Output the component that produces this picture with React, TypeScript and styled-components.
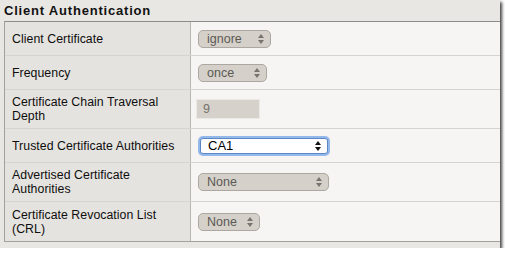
import { createGlobalStyle, styled } from 'styled-components';

const GlobalStyle = createGlobalStyle`
  html, body {
    margin: 0;
    padding: 0;
    background: #ffffff;
  }
  body {
    font-family: 'Liberation Sans', Arial, sans-serif;
  }
`;

const Panel = styled.section`
  width: 500px;
  height: 248px;
  box-sizing: border-box;
  background: #e9e7e3;
  box-shadow: 2px 2px 3px rgba(0, 0, 0, 0.75);
  display: flex;
  flex-direction: column;
`;

const Title = styled.h2`
  margin: 0;
  height: 21px;
  padding-left: 4px;
  display: flex;
  align-items: center;
  font-size: 13px;
  font-weight: bold;
  letter-spacing: 0.8px;
  color: #111;
`;

const Table = styled.div`
  margin-left: 4px;
  border-top: 1px solid #8e8c88;
  border-bottom: 1px solid #a3a19d;
  border-left: 1px solid #a3a19d;
  display: flex;
  flex-direction: column;
`;

const Row = styled.div<{ $h: number; $last?: boolean }>`
  display: grid;
  grid-template-columns: 186px 1fr;
  height: ${(p) => p.$h}px;
  box-sizing: border-box;
  border-bottom: ${(p) => (p.$last ? 'none' : '1px solid #d6d4d0')};
`;

const Label = styled.div`
  background: #e5e3df;
  border-right: 1px solid #b9b7b3;
  padding-left: 7px;
  display: flex;
  align-items: center;
  font-size: 12.3px;
  letter-spacing: 0.05px;
  line-height: 14px;
  color: #0e0e0e;
`;

const Value = styled.div`
  background: #f6f5f3;
  padding-left: 7px;
  display: flex;
  align-items: center;
`;

const SelectBox = styled.div<{ $w: number; $focus?: boolean }>`
  width: ${(p) => p.$w}px;
  height: ${(p) => (p.$focus ? 16 : 18)}px;
  box-sizing: border-box;
  margin-left: ${(p) => (p.$focus ? 2 : 0)}px;
  padding: 0 6px 0 ${(p) => (p.$focus ? 7 : 8)}px;
  display: flex;
  align-items: center;
  justify-content: space-between;
  border-radius: ${(p) => (p.$focus ? 3 : 5)}px;
  border: 1px solid ${(p) => (p.$focus ? '#5f86c4' : '#aca8a1')};
  background: ${(p) => (p.$focus ? '#ffffff' : '#d5d1ca')};
  box-shadow: ${(p) => (p.$focus ? '0 0 0 2px #93b8ea' : 'none')};
  font-size: ${(p) => (p.$focus ? 13 : 12.5)}px;
  color: ${(p) => (p.$focus ? '#000000' : '#5c5954')};
`;

const TextField = styled.div`
  width: 64px;
  height: 20px;
  margin-left: -2px;
  box-sizing: border-box;
  border: 1px solid #ebe9e5;
  background: #d6d2cb;
  padding-left: 6px;
  display: flex;
  align-items: center;
  font-size: 12.5px;
  color: #75726d;
`;

function Arrows({ color }: { color: string }) {
  return (
    <svg width="6" height="10" viewBox="0 0 6 10">
      <polygon points="0,4 3,0 6,4" fill={color} />
      <polygon points="0,6 3,10 6,6" fill={color} />
    </svg>
  );
}

function Select({ value, width, focus }: { value: string; width: number; focus?: boolean }) {
  return (
    <SelectBox $w={width} $focus={focus}>
      <span>{value}</span>
      <Arrows color={focus ? '#111' : '#77746f'} />
    </SelectBox>
  );
}

export default function App() {
  return (
    <>
      <GlobalStyle />
      <Panel>
        <Title>Client Authentication</Title>
        <Table>
          <Row $h={34}>
            <Label>Client Certificate</Label>
            <Value>
              <Select value="ignore" width={73} />
            </Value>
          </Row>
          <Row $h={34}>
            <Label>Frequency</Label>
            <Value>
              <Select value="once" width={69} />
            </Value>
          </Row>
          <Row $h={39}>
            <Label>
              Certificate Chain Traversal
              <br />
              Depth
            </Label>
            <Value>
              <TextField>9</TextField>
            </Value>
          </Row>
          <Row $h={34}>
            <Label>Trusted Certificate Authorities</Label>
            <Value>
              <Select value="CA1" width={128} focus />
            </Value>
          </Row>
          <Row $h={39}>
            <Label>
              Advertised Certificate
              <br />
              Authorities
            </Label>
            <Value>
              <Select value="None" width={131} />
            </Value>
          </Row>
          <Row $h={39} $last>
            <Label>
              Certificate Revocation List
              <br />
              (CRL)
            </Label>
            <Value>
              <Select value="None" width={62} />
            </Value>
          </Row>
        </Table>
      </Panel>
    </>
  );
}
